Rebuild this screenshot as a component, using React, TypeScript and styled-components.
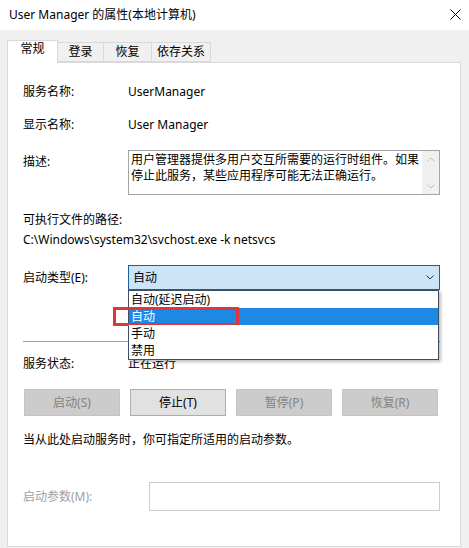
import React from 'react';
import styled, { createGlobalStyle } from 'styled-components';

const GlobalStyle = createGlobalStyle`
  html, body {
    margin: 0;
    padding: 0;
    background: #f0f0f0;
  }
  body {
    font-family: "Noto Sans", "Noto Sans CJK SC", sans-serif;
    font-size: 12px;
    color: #000;
  }
  * {
    box-sizing: border-box;
  }
`

const Window = styled.div`
  width: 469px;
  height: 548px;
  display: flex;
  flex-direction: column;
  overflow: hidden;
  background: #f0f0f0;
`

const TitleBar = styled.div`
  height: 30px;
  flex: none;
  display: flex;
  align-items: center;
  justify-content: space-between;
  padding: 0 8px 1px 9px;
  background: #fff;
  line-height: 16px;
`

const CloseButton = styled.div`
  width: 12px;
  height: 12px;
  display: flex;
  align-items: center;
  justify-content: center;
`

const Main = styled.div`
  flex: 1;
  display: flex;
  flex-direction: column;
  padding: 10px 8px 1px 7px;
`

const TabStrip = styled.div`
  display: flex;
  align-items: flex-end;
  height: 22px;
  position: relative;
  z-index: 1;
`

const Tab = styled.div<{ $active?: boolean; $width: number }>`
  width: ${p => p.$width}px;
  height: ${p => (p.$active ? 23 : 20)}px;
  margin-bottom: ${p => (p.$active ? -1 : 0)}px;
  display: flex;
  align-items: center;
  justify-content: center;
  padding-bottom: ${p => (p.$active ? 6 : 0)}px;
  background: ${p => (p.$active ? '#fff' : '#f0f0f0')};
  border: 1px solid #d9d9d9;
  border-bottom: ${p => (p.$active ? 'none' : '1px solid #d9d9d9')};
  border-left: ${p => (p.$active ? '1px solid #d9d9d9' : 'none')};
  line-height: 16px;
`

const Panel = styled.div`
  flex: 1;
  background: #fff;
  border: 1px solid #d9d9d9;
  padding: 21px 20px 0 15px;
  display: flex;
  flex-direction: column;
`

const Row = styled.div<{ $top?: number; $align?: string }>`
  display: flex;
  align-items: ${p => p.$align || 'center'};
  margin-top: ${p => p.$top || 0}px;
  line-height: 16px;
  position: relative;
`

const Label = styled.div<{ $width?: number; $disabled?: boolean; $pad?: number }>`
  width: ${p => p.$width || 105}px;
  flex: none;
  padding-top: ${p => p.$pad || 0}px;
  color: ${p => (p.$disabled ? '#a0a0a0' : '#000')};
`

const Value = styled.div`
  white-space: nowrap;
`

const TextLine = styled.div<{ $top?: number }>`
  margin-top: ${p => p.$top || 0}px;
  line-height: 16px;
  white-space: nowrap;
`

const DescBox = styled.div`
  width: 312px;
  height: 45px;
  border: 1px solid #a5a5a5;
  display: flex;
`

const DescText = styled.div`
  flex: 1;
  padding: 1px 0 0 2px;
  line-height: 16px;
  white-space: nowrap;
  overflow: hidden;
`

const ScrollBar = styled.div`
  width: 17px;
  flex: none;
  background: #f0f0f0;
  display: flex;
  flex-direction: column;
  justify-content: space-between;
  align-items: center;
  padding: 6px 0 5px;
`

const ComboWrap = styled.div`
  position: relative;
  width: 312px;
`

const Combo = styled.div`
  height: 25px;
  border: 1px solid #1f5f96;
  background: #cce4f7;
  display: flex;
  align-items: center;
  justify-content: space-between;
  padding: 0 5px 0 4px;
`

const DropList = styled.div`
  position: absolute;
  top: 100%;
  left: 0;
  width: 311px;
  background: #fff;
  border: 1px solid #3c4e60;
  box-shadow: 2px 2px 3px rgba(0, 0, 0, 0.25);
  z-index: 5;
`

const DropItem = styled.div<{ $selected?: boolean }>`
  height: 17px;
  line-height: 17px;
  padding-left: 2px;
  position: relative;
  background: ${p => (p.$selected ? '#1e88e5' : '#fff')};
  color: ${p => (p.$selected ? '#fff' : '#000')};
`

const Highlight = styled.div`
  position: absolute;
  left: -16px;
  top: -1px;
  width: 126px;
  height: 19px;
  border: 3px solid #e0353b;
  pointer-events: none;
`

const Separator = styled.div<{ $top: number }>`
  margin-top: ${p => p.$top}px;
  height: 1px;
  width: 417px;
  background: #a0a0a0;
`

const ButtonRow = styled.div<{ $top: number }>`
  display: flex;
  gap: 10px;
  margin-top: ${p => p.$top}px;
  padding-left: 1px;
`

const Button = styled.div<{ $disabled?: boolean }>`
  width: 96px;
  height: 27px;
  display: flex;
  align-items: center;
  justify-content: center;
  background: ${p => (p.$disabled ? '#cccccc' : '#e1e1e1')};
  border: 1px solid ${p => (p.$disabled ? '#c4c4c4' : '#adadad')};
  color: ${p => (p.$disabled ? '#838383' : '#000')};
  line-height: 16px;
`

const ParamInput = styled.div`
  width: 291px;
  height: 29px;
  border: 1px solid #cccccc;
  background: #fff;
`

const Chevron = ({ up, color }: { up?: boolean; color: string }) => (
  <svg width="8" height="5" viewBox="0 0 8 5">
    <path
      d={up ? 'M0.5 4.5 L4 1 L7.5 4.5' : 'M0.5 0.5 L4 4 L7.5 0.5'}
      fill="none"
      stroke={color}
      strokeWidth="1"
    />
  </svg>
)

const tabs = [
  { label: '常规', width: 51, active: true },
  { label: '登录', width: 46 },
  { label: '恢复', width: 48 },
  { label: '依存关系', width: 59 },
]

const startTypes = ['自动(延迟启动)', '自动', '手动', '禁用']

const buttons = [
  { label: '启动(S)', disabled: true },
  { label: '停止(T)' },
  { label: '暂停(P)', disabled: true },
  { label: '恢复(R)', disabled: true },
]

const App = () => {
  return (
    <Window>
      <GlobalStyle />
      <TitleBar>
        <span>User Manager 的属性(本地计算机)</span>
        <CloseButton>
          <svg width="11" height="11" viewBox="0 0 11 11">
            <path d="M0.5 0.5 L10.5 10.5 M10.5 0.5 L0.5 10.5" stroke="#000" strokeWidth="1" />
          </svg>
        </CloseButton>
      </TitleBar>
      <Main>
        <TabStrip>
          {tabs.map(t => (
            <Tab key={t.label} $active={t.active} $width={t.width}>
              {t.label}
            </Tab>
          ))}
        </TabStrip>
        <Panel>
          <Row>
            <Label>服务名称:</Label>
            <Value>UserManager</Value>
          </Row>
          <Row $top={17}>
            <Label>显示名称:</Label>
            <Value>User Manager</Value>
          </Row>
          <Row $top={17} $align="flex-start">
            <Label $pad={4}>描述:</Label>
            <DescBox>
              <DescText>
                <div>用户管理器提供多用户交互所需要的运行时组件。如果</div>
                <div>停止此服务，某些应用程序可能无法正确运行。</div>
              </DescText>
              <ScrollBar>
                <Chevron up color="#bdbdbd" />
                <Chevron color="#bdbdbd" />
              </ScrollBar>
            </DescBox>
          </Row>
          <TextLine $top={17}>可执行文件的路径:</TextLine>
          <TextLine $top={4}>C:\Windows\system32\svchost.exe -k netsvcs</TextLine>
          <Row $top={17} style={{ zIndex: 5 }}>
            <Label>启动类型(E):</Label>
            <ComboWrap>
              <Combo>
                <span>自动</span>
                <Chevron color="#333" />
              </Combo>
              <DropList>
                {startTypes.map((s, i) => (
                  <DropItem key={s} $selected={i === 1}>
                    {s}
                    {i === 1 && <Highlight />}
                  </DropItem>
                ))}
              </DropList>
            </ComboWrap>
          </Row>
          <Separator $top={51} />
          <Row $top={14}>
            <Label>服务状态:</Label>
            <Value>正在运行</Value>
          </Row>
          <ButtonRow $top={17}>
            {buttons.map(b => (
              <Button key={b.label} $disabled={b.disabled}>
                {b.label}
              </Button>
            ))}
          </ButtonRow>
          <TextLine $top={16}>当从此处启动服务时，你可指定所适用的启动参数。</TextLine>
          <Row $top={34}>
            <Label $width={126} $disabled>启动参数(M):</Label>
            <ParamInput />
          </Row>
        </Panel>
      </Main>
    </Window>
  )
}

export default App;
